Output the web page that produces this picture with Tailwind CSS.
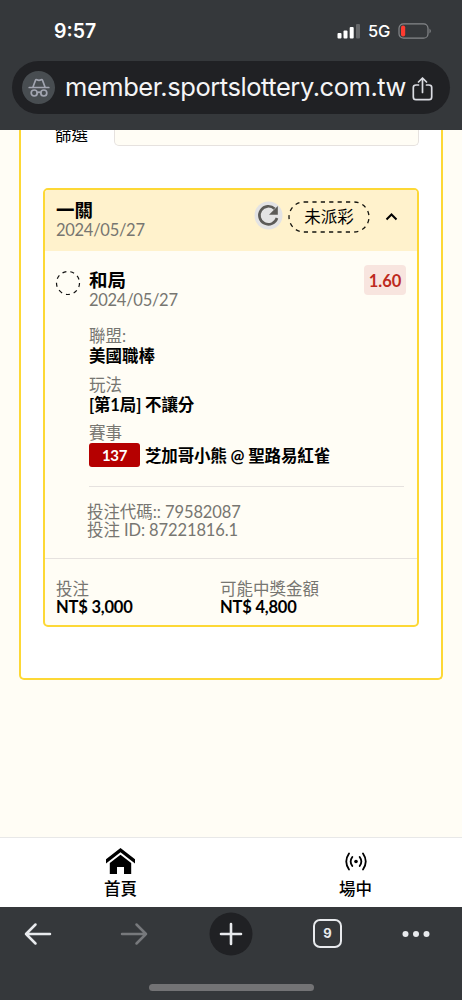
<!DOCTYPE html>
<html lang="zh-Hant">
<head>
<meta charset="utf-8">
<title>投注紀錄</title>
<script src="https://cdn.jsdelivr.net/npm/@tailwindcss/browser@4"></script>
</head>
<body class="w-[462px] h-[1000px] overflow-hidden flex flex-col bg-[#fffdf5] font-[Lato,'Noto_Sans_CJK_TC',sans-serif] text-black text-[16.5px]">
<header class="h-[130px] shrink-0 bg-[#35383b] flex flex-col font-[Inter,sans-serif]">
  <div class="h-[61px] flex items-center pl-[54px] pr-[30px] pt-px text-white">
    <span class="text-[19.500px] font-semibold leading-[20px]">9:57</span>
    <svg class="ml-auto" width="24" height="16" viewBox="0 0 24 16"><g fill="#fff"><rect x="0.5" y="10" width="4" height="5.500" rx="1"/><rect x="6.500" y="7.500" width="4" height="8" rx="1"/><rect x="12.700" y="4" width="4" height="11.500" rx="1"/></g><rect x="19" y="1" width="4" height="14.500" rx="1" fill="#66686a"/></svg>
    <span class="ml-[7px] w-[23px] text-[16.500px] font-medium tracking-[-0.3px] leading-[20px]">5G</span>
    <svg class="ml-[7px]" width="34" height="16" viewBox="0 0 34 16"><rect x="1" y="0.8" width="29" height="14.400" rx="4.500" fill="none" stroke="#85878a" stroke-width="1.200"/><rect x="3" y="2.600" width="4.200" height="10.800" rx="2" fill="#ff3b30"/><path d="M31.500 5.500q2.600 2.500 0 5z" fill="#85878a"/></svg>
  </div>
  <div class="ml-[12px] w-[438px] h-[53px] rounded-full bg-[#202124] flex items-center pl-[10px]">
    <span class="size-[33px] rounded-full bg-[#484d51] flex items-center justify-center">
      <svg width="22" height="20" viewBox="0 0 22 20" fill="none" stroke="#a2a5b1" stroke-width="1.700" stroke-linecap="round" stroke-linejoin="round"><path d="M1.200 9.500H20.800M5 9l2.500-6.700q.4-.9 1.300-.5 2.200 1 4.400 0 .9-.4 1.300.5L17 9"/><circle cx="6.200" cy="15" r="3"/><circle cx="15.800" cy="15" r="3"/><path d="M9.200 14.800q1.800-1.200 3.600 0"/></svg>
    </span>
    <span class="ml-[10px] w-[342px] text-[25.500px] tracking-[-0.45px] whitespace-nowrap text-[#f5f5f6]">member.sportslottery.com.tw</span>
    <svg class="ml-[5px] mt-[2px]" width="21" height="24" viewBox="0 0 21 24" fill="none" stroke="#dadce2" stroke-width="1.700" stroke-linecap="round" stroke-linejoin="round"><path d="M6.500 8H4Q1.300 8 1.300 10.500V20q0 2.700 2.700 2.700H17q2.700 0 2.700-2.700V10.500Q19.700 8 17 8H14.500M10.500 15.500V1.500M6.500 5l4-4 4 4"/></svg>
  </div>
</header>

<main class="h-[707px] shrink-0 overflow-hidden">
  <section class="ml-[19px] w-[424px] h-[550px] bg-white border-2 border-t-0 border-[#fdd835] rounded-b-[5px] px-[22px]">
    <div class="h-[58px] flex">
      <span class="ml-[12px] w-[59px] -mt-[7px] leading-[24px]">篩選</span>
      <div class="w-[306px] h-[16px] border border-t-0 border-[#e6e2df] rounded-b-[5px] bg-[#fffdf5]"></div>
    </div>
    <article class="w-[376px] h-[439px] border-2 border-[#fdd835] rounded-[5px] bg-[#fffdf5] overflow-hidden">
      <div class="h-[61px] bg-[#fff2cc] flex pl-[11px]">
        <div class="w-[198px] pt-[10px]">
          <h2 class="text-[18.500px] font-bold leading-[20px]">一關</h2>
          <p class="tracking-[-0.28px] leading-[20px] text-[#777671]">2024/05/27</p>
        </div>
        <svg class="mt-[11px]" width="29" height="29" viewBox="0 0 29 29"><circle cx="14.500" cy="14.500" r="14" fill="#e3e3e4"/><path d="M20.600 7.800A9 9 0 1 0 23 17" fill="none" stroke="#5c5b58" stroke-width="2.600"/><path d="M23.800 5v8.800H15z" fill="#5c5b58"/></svg>
        <div class="ml-[5px] mt-[11px] w-[82px] h-[32px] relative flex items-center justify-center">
          <svg class="absolute inset-0" width="82" height="32"><rect x="1" y="1" width="80" height="30" rx="15" fill="none" stroke="#15150f" stroke-width="1.300" stroke-dasharray="4.200 4.200"/></svg>
          <span class="relative">未派彩</span>
        </div>
        <svg class="ml-[15px] mt-[22px]" width="13" height="9" viewBox="0 0 13 9" fill="none" stroke="#000" stroke-width="2"><path d="M1.500 7.500l5-5 5 5"/></svg>
      </div>
      <div class="h-[308px] border-b border-[#e6e2df] flex pl-[10px] pr-[13px]">
        <svg class="mt-[19px] shrink-0" width="26" height="26"><circle cx="13" cy="13" r="11.500" fill="none" stroke="#111" stroke-width="1.200" stroke-dasharray="4 4.030"/></svg>
        <div class="ml-[8px] flex-1">
          <div class="flex h-[75px] pt-[14px]">
            <div class="pt-[5px]"><h3 class="text-[18.500px] font-bold leading-[20px]">和局</h3><p class="tracking-[-0.28px] leading-[20px] text-[#777671]">2024/05/27</p></div>
            <span class="ml-auto -mr-[2px] w-[42px] h-[30px] rounded-[4px] bg-[#f8e5df] text-[#bd2a20] font-bold flex items-center justify-center pt-[2px]">1.60</span>
          </div>
          <dl class="leading-[20px]">
            <dt class="text-[#777671]">聯盟:</dt><dd class="font-bold">美國職棒</dd>
            <dt class="mt-[9px] text-[#777671]">玩法</dt><dd class="font-bold tracking-[-0.15px]">[第1局] 不讓分</dd>
            <dt class="mt-[8px] text-[#777671]">賽事</dt>
            <dd class="font-bold flex items-center h-[24px] tracking-[-0.15px]"><span class="w-[51px] h-[24px] rounded-[3px] bg-[#b50000] text-white text-[15px] leading-[25px] text-center mr-[5px] tracking-[-0.3px]">137</span><span class="pt-px">芝加哥小熊 @ 聖路易紅雀</span></dd>
          </dl>
          <div class="mt-[19px] -ml-[2px] text-[#777671] leading-[18px]"><div class="ml-[2px] h-[17px] border-t border-[#e6e2df]"></div><p class="tracking-[-0.08px]">投注代碼:: 79582087</p><p class="tracking-[-0.1px]">投注 ID: 87221816.1</p></div>
        </div>
      </div>
      <div class="flex pl-[11px] pt-[21px] leading-[18px]">
        <div class="w-[164px]"><p class="text-[#777671]">投注</p><p class="font-bold tracking-[-0.2px]">NT$ 3,000</p></div>
        <div><p class="text-[#777671]">可能中獎金額</p><p class="font-bold tracking-[-0.2px]">NT$ 4,800</p></div>
      </div>
    </article>
  </section>
</main>

<nav class="h-[70px] shrink-0 bg-white border-t border-[#e8e8e8] flex font-medium leading-[20px] pl-[3px]">
  <a class="w-[235px] shrink-0 flex flex-col items-center pt-[10px]"><svg width="29" height="27" viewBox="0 0 29 27"><path d="M14.500 0L29 11.300V15.500L14.500 4.200 0 15.500V11.300z"/><path d="M3.800 15L14.500 6.800 25.200 15V26H18V19H11V26H3.800z"/></svg><span class="mt-[4px]">首頁</span></a>
  <a class="w-[235px] shrink-0 flex flex-col items-center pt-[14px]"><svg width="22" height="19" viewBox="0 0 22 19" fill="none" stroke="#000" stroke-width="1.800" stroke-linecap="round"><circle cx="11" cy="9.500" r="1.800" fill="#000" stroke="none"/><path d="M4 1.500Q-1.500 9.500 4 17.500M18 1.500Q23.500 9.500 18 17.500M7.300 5Q4 9.500 7.300 14M14.700 5Q18 9.500 14.700 14"/></svg><span class="mt-[8px]">場中</span></a>
</nav>

<footer class="h-[93px] shrink-0 bg-[#35383b] font-[Inter,sans-serif]">
  <div class="h-[53px] flex items-center pl-[24px] pr-[32px]">
    <svg width="28" height="24" viewBox="0 0 28 24" fill="none" stroke="#e8eaed" stroke-width="2.500" stroke-linecap="round" stroke-linejoin="round"><path d="M26 12H2M11.500 2.500L2 12l9.500 9.500"/></svg>
    <svg class="ml-[68px]" width="28" height="24" viewBox="0 0 28 24" fill="none" stroke="#77797c" stroke-width="2.500" stroke-linecap="round" stroke-linejoin="round"><path d="M2 12H26M16.500 2.500L26 12l-9.500 9.500"/></svg>
    <svg class="ml-[61px]" width="44" height="44" viewBox="0 0 44 44"><circle cx="22" cy="22" r="21.500" fill="#202124"/><path d="M12 22H32M22 12V32" stroke="#e8eaed" stroke-width="2.600" stroke-linecap="round"/></svg>
    <span class="ml-[60px] size-[29px] rounded-[7px] border-2 border-[#e8eaed] text-[#e8eaed] text-[13px] font-bold flex items-center justify-center">9</span>
    <svg class="ml-auto" width="28" height="8" viewBox="0 0 28 8" fill="#e8eaed"><circle cx="3.500" cy="4" r="3"/><circle cx="14" cy="4" r="3"/><circle cx="24.500" cy="4" r="3"/></svg>
  </div>
  <div class="mt-[24px] mx-auto w-[165px] h-[7px] rounded-full bg-[#737375]"></div>
</footer>
</body>
</html>
